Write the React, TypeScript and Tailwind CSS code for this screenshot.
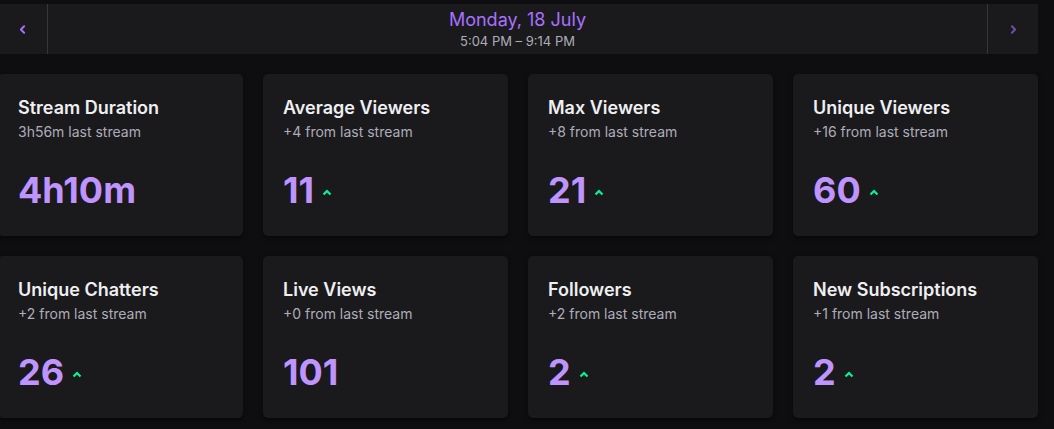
import { ChevronLeft, ChevronRight } from "lucide-react";

type Stat = {
  title: string;
  sub: string;
  value: string;
  up?: boolean;
};

const stats: Stat[] = [
  { title: "Stream Duration", sub: "3h56m last stream", value: "4h10m" },
  { title: "Average Viewers", sub: "+4 from last stream", value: "11", up: true },
  { title: "Max Viewers", sub: "+8 from last stream", value: "21", up: true },
  { title: "Unique Viewers", sub: "+16 from last stream", value: "60", up: true },
  { title: "Unique Chatters", sub: "+2 from last stream", value: "26", up: true },
  { title: "Live Views", sub: "+0 from last stream", value: "101" },
  { title: "Followers", sub: "+2 from last stream", value: "2", up: true },
  { title: "New Subscriptions", sub: "+1 from last stream", value: "2", up: true },
];

function UpArrow() {
  return (
    <svg width="10" height="7" viewBox="0 0 10 7" className="ml-[8px] mt-[4px]">
      <polyline
        points="1.5,5.5 5,2 8.5,5.5"
        fill="none"
        stroke="#00f593"
        strokeWidth={2.2}
      />
    </svg>
  );
}

function StatCard({ stat }: { stat: Stat }) {
  return (
    <div className="h-[162px] rounded-[5px] bg-[#1a1a1d] p-5 shadow-[0_2px_4px_rgba(0,0,0,0.5)]">
      <div className="text-[18px] font-semibold leading-7 text-[#efeff1]">
        {stat.title}
      </div>
      <div className="text-sm leading-5 text-[#adadb8]">{stat.sub}</div>
      <div className="mt-7 flex items-center">
        <span className="text-[36px] font-bold leading-10 text-[#bf94ff]">
          {stat.value}
        </span>
        {stat.up && <UpArrow />}
      </div>
    </div>
  );
}

export default function App() {
  return (
    <div
      className="h-[429px] w-[1054px] overflow-hidden bg-[#0e0e10] pt-1"
      style={{ fontFamily: "Inter, 'Noto Sans', sans-serif" }}
    >
      <div className="-ml-[2px] w-[1040px]">
        <div className="flex h-[50px] items-stretch bg-[#1a1a1d]">
          <button className="flex w-[50px] items-center justify-center border-r border-[#35353b] text-[#a970ff]">
            <ChevronLeft size={13} strokeWidth={3.5} />
          </button>
          <div className="flex flex-1 flex-col items-center pt-[5px]">
            <div className="text-[18px] leading-[22px] text-[#a970ff]">
              Monday, 18 July
            </div>
            <div className="mt-[2px] text-[13px] leading-4 text-[#adadb8]">
              5:04 PM – 9:14 PM
            </div>
          </div>
          <button className="flex w-[51px] items-center justify-center border-l border-[#35353b] text-[#6f50a8]">
            <ChevronRight size={13} strokeWidth={3.5} />
          </button>
        </div>

        <div className="mt-5 grid grid-cols-4 gap-5">
          {stats.map((s) => (
            <StatCard key={s.title} stat={s} />
          ))}
        </div>
      </div>
    </div>
  );
}
